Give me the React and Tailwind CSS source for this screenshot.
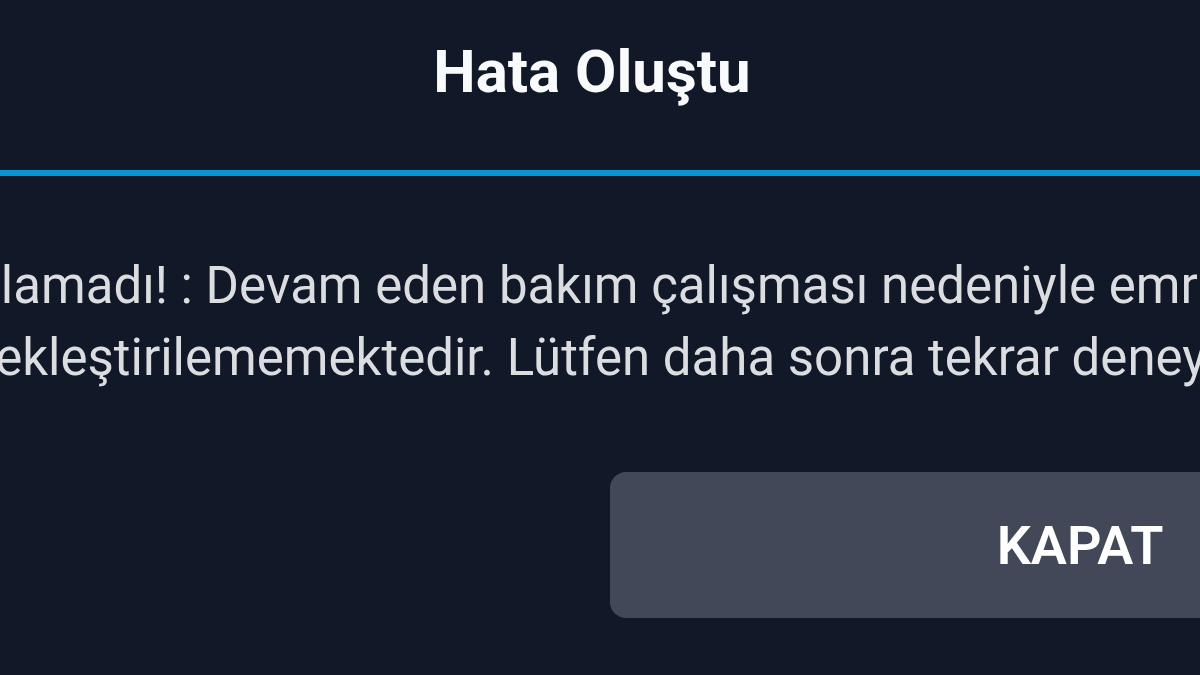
export default function App() {
  return (
    <div
      className="w-[1200px] h-[675px] overflow-hidden bg-[#111827] flex flex-col"
      style={{ fontFamily: "Roboto, 'Noto Sans', sans-serif" }}
    >
      {/* header */}
      <div className="w-[1184px] shrink-0 pt-[42px] pb-[68px] text-center">
        <h2 className="text-[60px] leading-[60px] font-bold text-[#f9fafb]">
          Hata Oluştu
        </h2>
      </div>
      <div className="h-[6px] w-full shrink-0 bg-[#0596d1]" />

      {/* message */}
      <div className="pt-[74px] whitespace-nowrap text-[51px] leading-[72px] text-[#dcdde0]">
        <p className="ml-[-97px]">Yapılamadı! : Devam eden bakım çalışması nedeniyle emriniz</p>
        <p className="ml-[-104px]">gerçekleştirilememektedir. Lütfen daha sonra tekrar deneyiniz.</p>
      </div>

      {/* actions */}
      <div className="flex pt-[78px]">
        <button
          type="button"
          className="ml-[610px] w-[940px] h-[146px] shrink-0 rounded-[16px] bg-[#424858] text-[54px] font-semibold text-white"
        >
          KAPAT
        </button>
      </div>
    </div>
  );
}
